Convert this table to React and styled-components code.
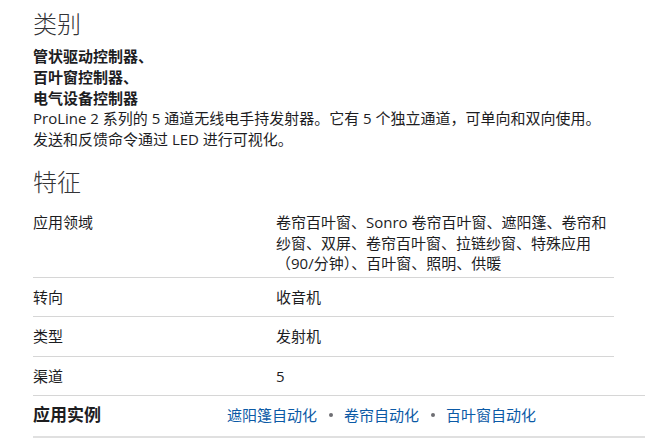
import React from "react";
import styled, { createGlobalStyle } from "styled-components";

const features = [
  {
    label: "应用领域",
    value:
      "卷帘百叶窗、Sonro 卷帘百叶窗、遮阳篷、卷帘和纱窗、双屏、卷帘百叶窗、拉链纱窗、特殊应用（90/分钟）、百叶窗、照明、供暖",
  },
  { label: "转向", value: "收音机" },
  { label: "类型", value: "发射机" },
  { label: "渠道", value: "5" },
];

const examples = ["遮阳篷自动化", "卷帘自动化", "百叶窗自动化"];

const App = () => {
  return (
    <Page>
      <GlobalStyle />
      <Heading>类别</Heading>
      <Categories>
        管状驱动控制器、
        <br />
        百叶窗控制器、
        <br />
        电气设备控制器
      </Categories>
      <Description>
        ProLine 2 系列的 5 通道无线电手持发射器。它有 5 个独立通道，可单向和双向使用。发送和反馈命令通过 LED 进行可视化。
      </Description>

      <Heading $spaced>特征</Heading>
      <Table>
        {features.map((f) => (
          <Row key={f.label}>
            <Label>{f.label}</Label>
            <Value>{f.value}</Value>
          </Row>
        ))}
      </Table>

      <Examples>
        <ExamplesTitle>应用实例</ExamplesTitle>
        <Links>
          {examples.map((ex, i) => (
            <React.Fragment key={ex}>
              {i > 0 && <Dot />}
              <Link href="#">{ex}</Link>
            </React.Fragment>
          ))}
        </Links>
      </Examples>
    </Page>
  );
};

export default App;

const GlobalStyle = createGlobalStyle`
  html, body {
    margin: 0;
    padding: 0;
    background: #ffffff;
  }
  body {
    font-family: "Open Sans", "Noto Sans CJK SC", sans-serif;
    color: #1d1d1f;
    overflow: hidden;
  }
`;

const Page = styled.div`
  padding: 9px 0 0 33px;
  width: 612px;
`;

const Heading = styled.h2`
  margin: ${(p) => (p.$spaced ? "17px" : "0")} 0 0;
  font-size: 24px;
  line-height: 30px;
  font-weight: 300;
  color: #333336;
`;

const Categories = styled.div`
  margin-top: 7px;
  font-size: 15px;
  line-height: 20.8px;
  font-weight: 700;
`;

const Description = styled.p`
  margin: 0;
  font-size: 15px;
  line-height: 21px;
  width: 575px;
`;

const Table = styled.div`
  margin-top: 3px;
  width: 581px;
`;

const Row = styled.div`
  display: grid;
  grid-template-columns: 243px 1fr;
  padding: 9px 0;
  font-size: 15px;
  line-height: 20.5px;
  border-top: 1px solid #d6d6d6;

  &:first-child {
    border-top: none;
    padding: 12px 0 3px;
  }
`;

const Label = styled.div``;

const Value = styled.div`
  padding-right: 4px;
`;

const Examples = styled.div`
  display: grid;
  grid-template-columns: 194px 1fr;
  align-items: center;
  padding: 7px 0 9px;
  border-top: 1px solid #d6d6d6;
  border-bottom: 2px solid #e0e0e0;
`;

const ExamplesTitle = styled.div`
  font-size: 17px;
  line-height: 24px;
  font-weight: 700;
`;

const Links = styled.div`
  display: flex;
  align-items: center;
`;

const Link = styled.a`
  font-size: 15px;
  line-height: 24px;
  color: #0b5aa6;
  text-decoration: none;
`;

const Dot = styled.span`
  width: 4px;
  height: 4px;
  border-radius: 50%;
  background: #6e6e73;
  margin: 0 11px 0 12px;
`;
